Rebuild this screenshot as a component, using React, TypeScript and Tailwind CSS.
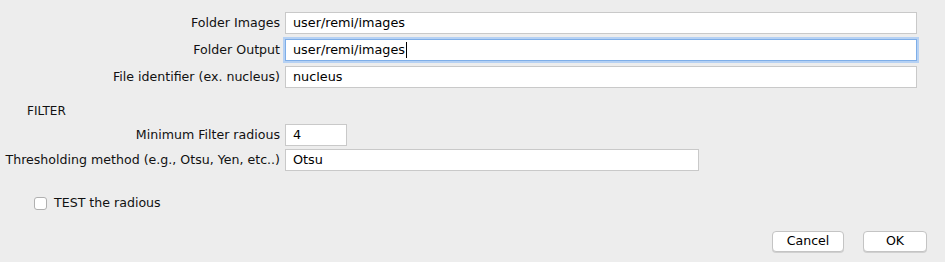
import React from "react";

const font = { fontFamily: '"DejaVu Sans", "Liberation Sans", sans-serif' };

function Row({ label, value, width, focused, mb }: { label: string; value: string; width: string; focused?: boolean; mb: string }) {
  return (
    <div className={`flex items-center ${mb}`}>
      <div className="w-[280px] shrink-0 whitespace-nowrap text-right text-[12.6px] text-[#111111]">{label}</div>
      <div
        className={`ml-[5px] h-[22px] ${width} flex items-center bg-white pl-[7px] text-[12.8px] text-black ${
          focused ? "border border-[#7eaee8] shadow-[0_0_0_2px_#b6d1f3]" : "border border-[#c9c9c9]"
        }`}
      >
        <span>{value}</span>
        {focused && <span className="ml-px inline-block h-[16px] w-px bg-black" />}
      </div>
    </div>
  );
}

export default function App() {
  return (
    <div className="h-[262px] w-[945px] bg-[#ededed] overflow-hidden" style={font}>
      <div className="pt-[12px]">
        <Row label="Folder Images" value="user/remi/images" width="w-[632px]" mb="mb-[5px]" />
        <Row label="Folder Output" value="user/remi/images" width="w-[632px]" focused mb="mb-[5px]" />
        <Row label="File identifier (ex. nucleus)" value="nucleus" width="w-[632px]" mb="mb-[16px]" />
        <div className="pl-[27px] h-[14px] flex items-center text-[12px] text-[#111111] mb-[6px]">FILTER</div>
        <Row label="Minimum Filter radious" value="4" width="w-[62px]" mb="mb-[3px]" />
        <Row label="Thresholding method (e.g., Otsu, Yen, etc..)" value="Otsu" width="w-[414px]" mb="mb-[25px]" />
        <div className="flex items-center pl-[34px] h-[14px]">
          <div className="h-[13px] w-[13px] rounded-[3px] border border-[#b0b0b0] bg-white" />
          <span className="ml-[7px] text-[12.6px] text-[#111111]">TEST the radious</span>
        </div>
        <div className="mt-[21px] flex justify-end pr-[18px] gap-[19px]">
          <button className="h-[21px] w-[72px] rounded-[4px] border border-[#c4c4c4] bg-white text-[12.6px] text-black shadow-[0_1px_0_#d0d0d0]">Cancel</button>
          <button className="h-[21px] w-[64px] rounded-[4px] border border-[#c4c4c4] bg-white text-[12.6px] text-black shadow-[0_1px_0_#d0d0d0]">OK</button>
        </div>
      </div>
    </div>
  );
}
